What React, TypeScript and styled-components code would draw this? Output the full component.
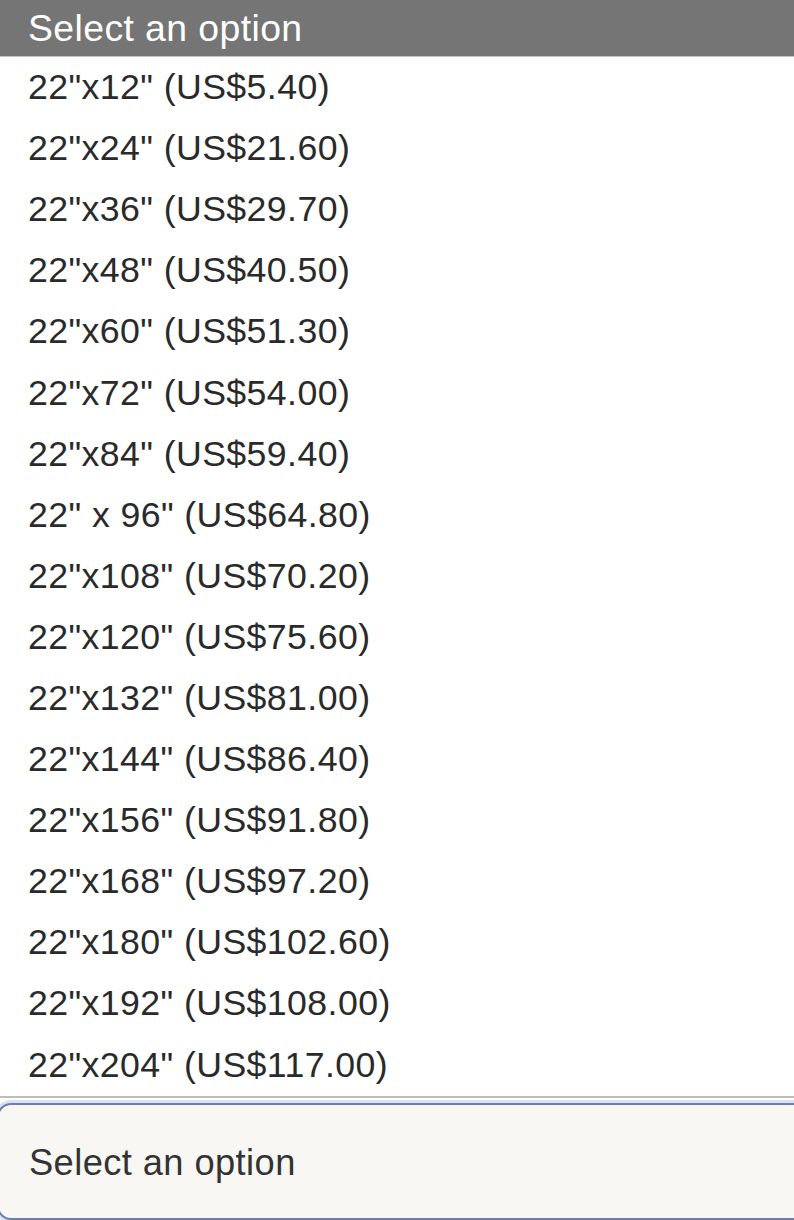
import styled, { createGlobalStyle } from "styled-components";

const sizes: [string, string][] = [
  ['22"x12"', "5.40"],
  ['22"x24"', "21.60"],
  ['22"x36"', "29.70"],
  ['22"x48"', "40.50"],
  ['22"x60"', "51.30"],
  ['22"x72"', "54.00"],
  ['22"x84"', "59.40"],
  ['22" x 96"', "64.80"],
  ['22"x108"', "70.20"],
  ['22"x120"', "75.60"],
  ['22"x132"', "81.00"],
  ['22"x144"', "86.40"],
  ['22"x156"', "91.80"],
  ['22"x168"', "97.20"],
  ['22"x180"', "102.60"],
  ['22"x192"', "108.00"],
  ['22"x204"', "117.00"],
];

const GlobalStyle = createGlobalStyle`
  body {
    margin: 0;
    background: #fff;
    font-family: "Liberation Sans", Arial, sans-serif;
    overflow: hidden;
  }
`;

const Page = styled.div`
  width: 794px;
  height: 1220px;
  display: flex;
  flex-direction: column;
`;

const Menu = styled.ul`
  list-style: none;
  margin: 0;
  padding: 0;
  border-bottom: 2px solid #bcbcbc;
`;

const Option = styled.li<{ $active?: boolean }>`
  display: flex;
  align-items: center;
  padding: 0 28px;
  height: ${(p) => (p.$active ? "56px" : "61.1px")};
  font-size: ${(p) => (p.$active ? "37.4px" : "35.7px")};
  letter-spacing: 0.4px;
  color: ${(p) => (p.$active ? "#fff" : "#2a2a2a")};
  background: ${(p) => (p.$active ? "#757575" : "#fff")};
  border-bottom: ${(p) => (p.$active ? "1px solid #c4c4c4" : "none")};
`;

const Field = styled.div`
  margin: 5px -20px 0 -3px;
  height: 110px;
  display: flex;
  align-items: center;
  padding: 4px 30px 0;
  background: #f8f7f4;
  border: 2px solid #6d7ea8;
  border-radius: 14px;
  box-shadow: 0 0 0 3px #d9e3f6;
  font-size: 36.3px;
  letter-spacing: 0.4px;
  color: #333;
`;

export default function App() {
  return (
    <Page>
      <GlobalStyle />
      <Menu>
        <Option $active>Select an option</Option>
        {sizes.map(([size, price]) => (
          <Option key={size}>
            {size} (US${price})
          </Option>
        ))}
      </Menu>
      <Field>Select an option</Field>
    </Page>
  );
}
